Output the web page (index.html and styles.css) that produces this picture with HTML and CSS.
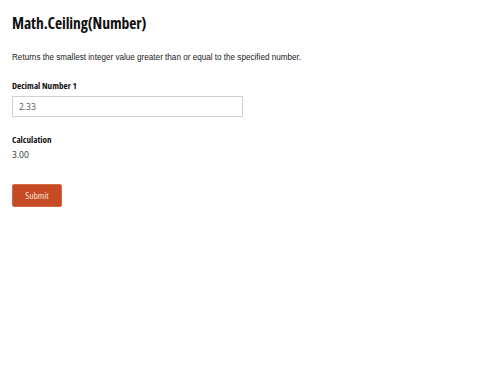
FILE: index.html
```html
<!DOCTYPE html>
<html>
<head>
<meta charset="utf-8">
<link rel="stylesheet" href="styles.css">
</head>
<body>
<div class="page">
  <h1 class="title">Math.Ceiling(Number)</h1>
  <p class="desc">Returns the smallest integer value greater than or equal to the specified number.</p>
  <div class="field">
    <label class="label">Decimal Number 1</label>
    <input class="input" type="text" value="2.33">
  </div>
  <div class="field calc">
    <div class="label">Calculation</div>
    <div class="value">3.00</div>
  </div>
  <button class="btn">Submit</button>
</div>
</body>
</html>
```
FILE: styles.css
```css
html, body { margin: 0; padding: 0; background: #fff; }
.page { padding: 13px 12px; font-family: "Open Sans", sans-serif; color: #000; }
.title { margin: 0; font-size: 15.6px; font-weight: 700; font-stretch: 75%; line-height: 20px; letter-spacing: -0.1px; color: #111; }
.desc { margin: 19px 0 0; font-family: "Liberation Sans", Arial, sans-serif; font-size: 8.15px; line-height: 12px; color: #222; }
.field { margin-top: 16px; display: flex; flex-direction: column; }
.label { font-size: 9.1px; font-weight: 700; font-stretch: 75%; line-height: 12px; color: #111; }
.input { margin-top: 4px; width: 231px; height: 21px; box-sizing: border-box; border: 1px solid #d0d0d0; padding: 0 6px; font-family: "Open Sans", sans-serif; font-size: 8.5px; color: #555; outline: none; }
.calc { margin-top: 17px; }
.value { margin-top: 3px; font-size: 8.5px; color: #333; line-height: 12px; }
.btn { display: block; margin-top: 23px; width: 50px; height: 23px; background: #c44b24; color: #fbe3d8; border: 1px solid #d66a47; border-radius: 2px; font-family: "Open Sans", sans-serif; font-stretch: 75%; font-size: 9.5px; padding: 0; }
```
